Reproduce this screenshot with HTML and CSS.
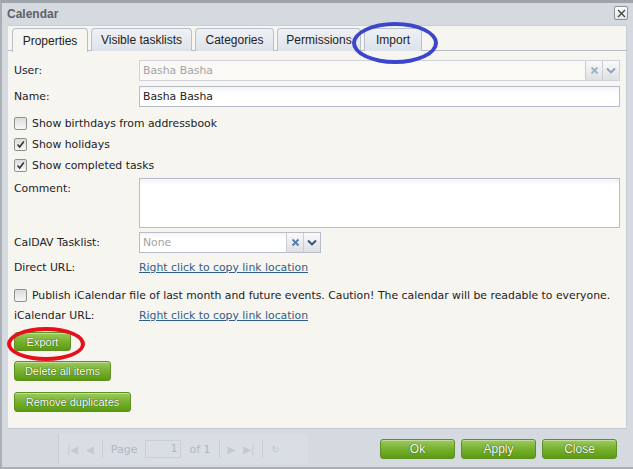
FILE: index.html
```html
<!DOCTYPE html>
<html>
<head>
    <title>Calendar</title>
    <link rel="stylesheet" href="styles.css">
</head>
<body>
    <div class="window">
        <div class="titlebar">
            <span class="title">Calendar</span>
            <span class="close-x">
                <svg width="9" height="9" viewBox="0 0 9 9"><path d="M1 1L8 8M8 1L1 8" stroke="#444" stroke-width="1.4"/></svg>
            </span>
        </div>

        <div class="tabs">
            <div class="tab active">Properties</div>
            <div class="tab">Visible tasklists</div>
            <div class="tab">Categories</div>
            <div class="tab">Permissions</div>
            <div class="tab">Import</div>
        </div>

        <div class="panel">
            <div class="row row-user">
                <label class="lbl">User:</label>
                <div class="combo combo-wide">
                    <div class="combo-input disabled">Basha Basha</div>
                    <span class="trigger"><svg width="9" height="9" viewBox="0 0 9 9"><path d="M1.5 1.5L7.5 7.5M7.5 1.5L1.5 7.5" stroke="#98b2cc" stroke-width="1.8"/></svg></span>
                    <span class="trigger"><svg width="10" height="7" viewBox="0 0 10 7"><path d="M1 1.5L5 5.5L9 1.5" fill="none" stroke="#8fa0b8" stroke-width="1.8"/></svg></span>
                </div>
            </div>
            <div class="row row-name">
                <label class="lbl">Name:</label>
                <div class="text-input">Basha Basha</div>
            </div>

            <div class="check-row"><span class="cb"></span>Show birthdays from addressbook</div>
            <div class="check-row"><span class="cb checked"><svg width="9" height="9" viewBox="0 0 9 9"><path d="M1.5 4.5L3.7 7L7.8 1.5" fill="none" stroke="#333" stroke-width="1.6"/></svg></span>Show holidays</div>
            <div class="check-row"><span class="cb checked"><svg width="9" height="9" viewBox="0 0 9 9"><path d="M1.5 4.5L3.7 7L7.8 1.5" fill="none" stroke="#333" stroke-width="1.6"/></svg></span>Show completed tasks</div>

            <div class="row row-comment">
                <label class="lbl">Comment:</label>
                <div class="textarea"></div>
            </div>

            <div class="row row-caldav">
                <label class="lbl">CalDAV Tasklist:</label>
                <div class="combo combo-small">
                    <div class="combo-input placeholder">None</div>
                    <span class="trigger"><svg width="9" height="9" viewBox="0 0 9 9"><path d="M1.5 1.5L7.5 7.5M7.5 1.5L1.5 7.5" stroke="#4f7fb0" stroke-width="1.8"/></svg></span>
                    <span class="trigger"><svg width="10" height="7" viewBox="0 0 10 7"><path d="M1 1.5L5 5.5L9 1.5" fill="none" stroke="#2d4f7e" stroke-width="1.8"/></svg></span>
                </div>
            </div>

            <div class="row row-link row-direct">
                <label class="lbl">Direct URL:</label>
                <a class="link" href="#">Right click to copy link location</a>
            </div>

            <div class="check-row row-publish"><span class="cb"></span>Publish iCalendar file of last month and future events. Caution! The calendar will be readable to everyone.</div>

            <div class="row row-link">
                <label class="lbl">iCalendar URL:</label>
                <a class="link" href="#">Right click to copy link location</a>
            </div>

            <button class="green-btn btn-export">Export</button>
            <button class="green-btn btn-delete">Delete all items</button>
            <button class="green-btn btn-dupes">Remove duplicates</button>
        </div>

        <div class="footer">
            <div class="pager">
                <span class="pg-icon">|&#9664;</span>
                <span class="pg-icon">&#9664;</span>
                <span class="pg-sep"></span>
                <span>Page</span>
                <span class="pg-box">1</span>
                <span>of 1</span>
                <span class="pg-sep"></span>
                <span class="pg-icon">&#9654;</span>
                <span class="pg-icon">&#9654;|</span>
                <span class="pg-sep"></span>
                <span class="pg-icon">&#8635;</span>
            </div>
            <div class="actions">
                <button class="green-btn action">Ok</button>
                <button class="green-btn action">Apply</button>
                <button class="green-btn action">Close</button>
            </div>
        </div>

        <!-- пометки на скриншоте -->
        <div class="mark mark-blue"></div>
        <div class="mark mark-red"></div>
    </div>
</body>
</html>
```

FILE: styles.css
```css
:root {
    --frame: #d4dae0;
    --panel: #f6f5f0;
    --border: #b5bcc7;
    --text: #222;
    --green-top: #9ccb5e;
    --green-bottom: #5c9a12;
}

* {
    margin: 0;
    padding: 0;
    box-sizing: border-box;
}

body {
    width: 633px;
    height: 469px;
    overflow: hidden;
    font-family: "DejaVu Sans", Verdana, sans-serif;
    font-size: 10.85px;
    color: var(--text);
    background: var(--frame);
}

.window {
    position: relative;
    width: 633px;
    height: 469px;
    background: var(--frame);
    border-top: 3px solid #9ea4aa;
    border-left: 2px solid #a9afb5;
    border-bottom: 2px solid #a9afb5;
}

/* Заголовок */
.titlebar {
    position: relative;
    height: 22px;
    display: flex;
    align-items: center;
    padding-left: 5px;
}

.title {
    font-family: "Liberation Sans", Arial, sans-serif;
    font-weight: bold;
    font-size: 12px;
    color: #5e6166;
}

.close-x {
    position: absolute;
    right: 5px;
    top: 3px;
    width: 14px;
    height: 14px;
    border: 1px solid #8b9096;
    border-radius: 2px;
    background: linear-gradient(#fdfdfd, #e4e6e8);
    display: flex;
    align-items: center;
    justify-content: center;
}

/* Вкладки */
.tabs {
    position: relative;
    margin-left: 6px;
    width: 619px;
    height: 26px;
    display: flex;
    gap: 3px;
    padding-left: 4px;
    border-bottom: 1px solid var(--border);
    background: var(--panel);
    border-top: 1px solid #c8ced5;
    border-right: 1px solid #c8ced5;
}

.tab {
    margin-top: 2px;
    height: 23px;
    display: flex;
    align-items: center;
    justify-content: center;
    white-space: nowrap;
    font-family: "Liberation Sans", Arial, sans-serif;
    font-size: 12px;
    color: #222;
    background: linear-gradient(#eef1f5, #dde3ea);
    border: 1px solid #b8c0ca;
    border-bottom: none;
    border-radius: 4px 4px 0 0;
}

.tab.active {
    background: var(--panel);
    height: 24px;
    margin-bottom: -1px;
}

.tab:nth-child(1) { width: 76px; }
.tab:nth-child(2) { width: 101px; }
.tab:nth-child(3) { width: 79px; }
.tab:nth-child(4) { width: 84px; }
.tab:nth-child(5) { width: 58px; }

/* Панель формы */
.panel {
    margin-left: 6px;
    width: 619px;
    height: 378px;
    background: var(--panel);
    border-right: 1px solid #c8ced5;
    border-bottom: 1px solid #c0c6cd;
    padding: 8px 6px 0 6px;
    display: flex;
    flex-direction: column;
    align-items: flex-start;
}

.row {
    width: 100%;
    display: flex;
    align-items: center;
}

.lbl {
    width: 125px;
    flex-shrink: 0;
}

.row-user { height: 22px; }
.row-name { height: 22px; margin-top: 4px; }

.text-input,
.combo {
    height: 21px;
    border: 1px solid #b6bcc9;
    background: linear-gradient(#f4f4f4, #fff 6px);
    display: flex;
    align-items: center;
}

.text-input {
    flex: 1;
    padding-left: 3px;
}

.combo-wide { flex: 1; }
.combo-small { width: 182px; }

.combo-input {
    flex: 1;
    padding-left: 3px;
}

.combo-wide {
    background: #faf9f6;
    border-color: #cfd2da;
}

.disabled,
.placeholder {
    color: #a3a3a3;
}

.trigger {
    width: 17px;
    height: 100%;
    border-left: 1px solid #c9ced6;
    background: linear-gradient(#fafafa, #dedfe2);
    display: flex;
    align-items: center;
    justify-content: center;
}

.check-row {
    height: 21px;
    display: flex;
    align-items: center;
    white-space: nowrap;
}

.row-name + .check-row { margin-top: 6px; }

.cb {
    width: 13px;
    height: 13px;
    margin-right: 5px;
    border: 1px solid #8e8f8f;
    border-radius: 2px;
    background: linear-gradient(#dcdcdc, #f7f7f7);
    display: flex;
    align-items: center;
    justify-content: center;
}

.row-comment {
    margin-top: 2px;
    align-items: flex-start;
}

.row-comment .lbl { padding-top: 4px; }

.textarea {
    flex: 1;
    height: 50px;
    border: 1px solid #b6bcc9;
    background: linear-gradient(#f2f2f2, #fff 6px);
}

.row-caldav { height: 21px; margin-top: 4px; }

.row-link { height: 20px; }
.row-direct { margin-top: 4px; }

.link {
    color: #2f5f8a;
    text-decoration: underline;
}

.row-publish { margin-top: 8px; height: 20px; }

/* Зелёные кнопки */
.green-btn {
    font-family: "Liberation Sans", Arial, sans-serif;
    font-size: 11px;
    white-space: nowrap;
    color: #fff;
    text-shadow: 0 0 1px #2f5a05, 0 0 1px #2f5a05;
    border: 1px solid #5e8f23;
    border-radius: 3px;
    background: linear-gradient(var(--green-top), #7bb332 45%, var(--green-bottom));
    box-shadow: inset 0 1px 0 rgba(255, 255, 255, 0.4);
    padding: 0;
    height: 19px;
    cursor: pointer;
}

.btn-export { margin-top: 7px; width: 57px; }
.btn-delete { margin-top: 10px; width: 97px; height: 20px; }
.btn-dupes { margin-top: 11px; width: 117px; height: 20px; }

/* Нижняя часть */
.footer {
    position: relative;
    height: 40px;
    display: flex;
    align-items: center;
    justify-content: space-between;
    padding: 0 16px 0 56px;
}

.pager {
    height: 30px;
    width: 250px;
    display: flex;
    align-items: center;
    gap: 8px;
    padding-left: 8px;
    background: #d8dee4;
    border-left: 1px solid #c6ccd2;
    font-family: "DejaVu Sans", Verdana, sans-serif;
    font-size: 11px;
    color: #b1b8bf;
}

.pg-icon { color: #c3c9cf; font-size: 10px; }
.pg-sep { width: 1px; height: 18px; background: #c9cfd5; }

.pg-box {
    width: 36px;
    height: 18px;
    border: 1px solid #c9cfd5;
    text-align: right;
    padding-right: 3px;
    line-height: 16px;
}

.actions {
    display: flex;
    gap: 6px;
}

.action {
    width: 75px;
    height: 20px;
    font-size: 12px;
}

/* Пометки */
.mark {
    position: absolute;
    border-radius: 50%;
}

.mark-blue {
    left: 350px;
    top: 19px;
    width: 86px;
    height: 42px;
    border: 4px solid #3c46cc;
}

.mark-red {
    left: 5px;
    top: 324px;
    width: 78px;
    height: 34px;
    border: 4px solid #e5101c;
}
```
